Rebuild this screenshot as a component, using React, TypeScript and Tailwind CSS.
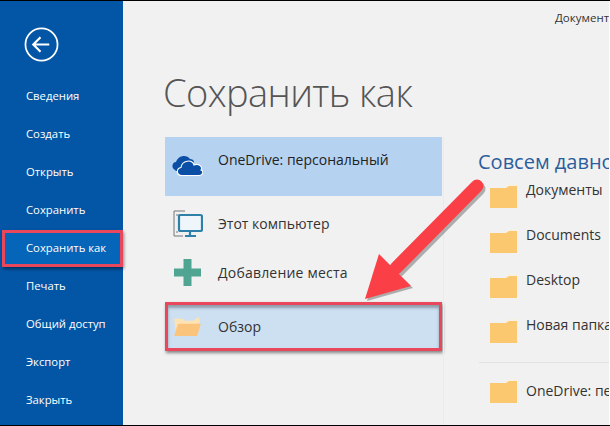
const nav = ["Сведения", "Создать", "Открыть", "Сохранить", "Сохранить как", "Печать", "Общий доступ", "Экспорт", "Закрыть"];

function Folder({ className }: { className: string }) {
  return (
    <svg viewBox="0 0 27 25" className={className}>
      <path d="M15 4 L19 1 H27 V5 H15 Z" fill="#f7f1e3" />
      <path d="M0 5 H16 L19 3 H27 V25 H0 Z" fill="#fbc76f" />
    </svg>
  );
}

function Recent({ label, className }: { label: string; className: string }) {
  return (
    <div className={`flex items-start gap-[9px] whitespace-nowrap ${className}`}>
      <Folder className="w-[27px] h-[25px] shrink-0 mt-[3px]" />
      <span className="text-[14px] leading-[20px] text-[#333]">{label}</span>
    </div>
  );
}

export default function App() {
  return (
    <div className="relative w-[610px] h-[426px] overflow-hidden flex bg-[#f1f1f1] border-t border-b border-black font-['Open_Sans',sans-serif]">
      <aside className="w-[123px] shrink-0 bg-[#0356a5] flex flex-col">
        <div className="h-[76px] flex items-start pl-[24px] pt-[26px]">
          <svg viewBox="0 0 36 36" className="w-[35px] h-[35px]" fill="none" stroke="white" strokeWidth="1.8">
            <circle cx="18" cy="18" r="16.5" />
            <path d="M9.5 18 H26 M17 10.5 L9.5 18 L17 25.5" strokeWidth="2.2" />
          </svg>
        </div>
        <nav className="flex flex-col">
          {nav.map((n, i) =>
            i === 4 ? (
              <div key={n} className="h-[37px] mt-[1px] ml-[2px] pl-[21px] flex items-center bg-[#0565b8] border-[3px] border-[#e8475c] shadow-[1px_2px_3px_rgba(0,0,0,0.45)] relative z-10">
                <span className="text-[11.3px] text-white whitespace-nowrap">{n}</span>
              </div>
            ) : (
              <div key={n} className="h-[38px] flex items-center pl-[26px]">
                <span className="text-[11.3px] text-white whitespace-nowrap">{n}</span>
              </div>
            )
          )}
        </nav>
      </aside>

      <main className="flex-1 min-w-0 flex flex-col">
        <div className="h-[18px] mt-[8px] pl-[432px] text-[11.5px] leading-[18px] text-[#333] whitespace-nowrap">Документ</div>
        <h1 className="mt-[37px] ml-[40px] h-[56px] text-[38px] leading-[56px] tracking-[-0.6px] font-light text-[#555] whitespace-nowrap">Сохранить как</h1>
        <div className="mt-[17px] flex flex-1 min-h-0">
          <div className="ml-[42px] w-[277px] shrink-0 flex flex-col">
            <div className="h-[59px] bg-[#b5d3f1] flex items-start">
              <svg viewBox="0 0 31 22" className="ml-[7px] mt-[17px] w-[31px] h-[22px]">
                <path d="M3 16 C-1 14 0 8 4 8 C6 1 15 0 18 5 C20 5 22 6 22 8 L12 17 H4 Z" fill="#0b4ea6" />
                <path d="M10 21.5 C4 21.5 4 14.5 9 13.5 C10 6 20 5 22 11 C27 9 31 13 29 16 C32 17 31 21.5 27 21.5 Z" fill="#0b4ea6" stroke="#ffffff" strokeWidth="1.1" />
              </svg>
              <span className="ml-[15px] mt-[13px] text-[14px] leading-[20px] text-[#222] whitespace-nowrap">OneDrive: персональный</span>
            </div>
            <div className="h-[45px] mt-[5px] flex items-center">
              <svg viewBox="0 0 30 28" className="ml-[8px] w-[30px] h-[28px]" fill="none">
                <path d="M1 1 H12 M1 1 V26 H10 M3 5 H10 M3 22 H5" stroke="#777" strokeWidth="1" />
                <rect x="6" y="5" width="23" height="16" rx="1.5" fill="#eef5fb" stroke="#2e80a8" strokeWidth="2.2" />
                <path d="M17 21 V25 M12 26 H23" stroke="#2e80a8" strokeWidth="2.2" />
              </svg>
              <span className="ml-[15px] text-[14px] text-[#333] whitespace-nowrap">Этот компьютер</span>
            </div>
            <div className="h-[45px] mt-[4px] flex items-center">
              <svg viewBox="0 0 27 27" className="ml-[9px] w-[27px] h-[27px]">
                <path d="M9.5 0 H17.5 V9.5 H27 V17.5 H17.5 V27 H9.5 V17.5 H0 V9.5 H9.5 Z" fill="#4fa592" />
              </svg>
              <span className="ml-[17px] text-[14px] tracking-[0.2px] text-[#333] whitespace-nowrap">Добавление места</span>
            </div>
            <div className="h-[49px] mt-[7px] bg-[#cde0f2] border-[3px] border-[#e8475c] shadow-[1px_2px_3px_rgba(0,0,0,0.45),inset_0_3px_3px_rgba(0,0,0,0.3)] flex items-center">
              <svg viewBox="0 0 30 22" className="ml-[5px] w-[29px] h-[21px]">
                <path d="M3 20 L1 3 H10 L12 5 H21 L27 1 L28 7 Z" fill="#fde3b4" />
                <path d="M1 21 L5 8 H29 L25 21 Z" fill="#fbc47c" />
              </svg>
              <span className="ml-[16px] text-[14px] text-[#333]">Обзор</span>
            </div>
          </div>
          <div className="ml-[1px] w-[1px] bg-[#ebebeb] self-stretch" />
          <div className="ml-[34px] flex-1 min-w-0 overflow-hidden">
            <div className="mt-[12px] h-[26px] text-[20px] leading-[26px] text-[#2b5e9c] whitespace-nowrap">Совсем давно</div>
            <div className="ml-[12px] mt-[5px]">
              <Recent label="Документы" className="h-[45px]" />
              <Recent label="Documents" className="h-[45px]" />
              <Recent label="Desktop" className="h-[45px]" />
              <Recent label="Новая папка" className="h-[45px]" />
            </div>
            <div className="h-[1px] bg-[#e2e2e2] ml-[1px] mt-[2px]" />
            <div className="ml-[12px] mt-[15px]">
              <div className="flex items-center gap-[9px] whitespace-nowrap">
                <Folder className="w-[27px] h-[25px] shrink-0" />
                <span className="text-[14px] text-[#333]">OneDrive: персональный</span>
              </div>
            </div>
          </div>
        </div>
      </main>

      <svg viewBox="0 0 610 426" className="absolute left-0 top-[-1px] w-[610px] h-[426px] pointer-events-none">
        <g fill="#000" opacity="0.28" transform="translate(2,3)">
          <path d="M477 186 L396 268" stroke="#000" strokeWidth="13" strokeLinecap="round" />
          <path d="M365 298 L379 255 L411 285 Z" />
        </g>
        <path d="M477 186 L396 268" stroke="#fb3f47" strokeWidth="13" strokeLinecap="round" />
        <path d="M365 299 L379 254 L411 286 Z" fill="#fb3f47" />
      </svg>
      <div className="absolute right-0 top-0 bottom-0 w-[1px] bg-white" />
    </div>
  );
}
